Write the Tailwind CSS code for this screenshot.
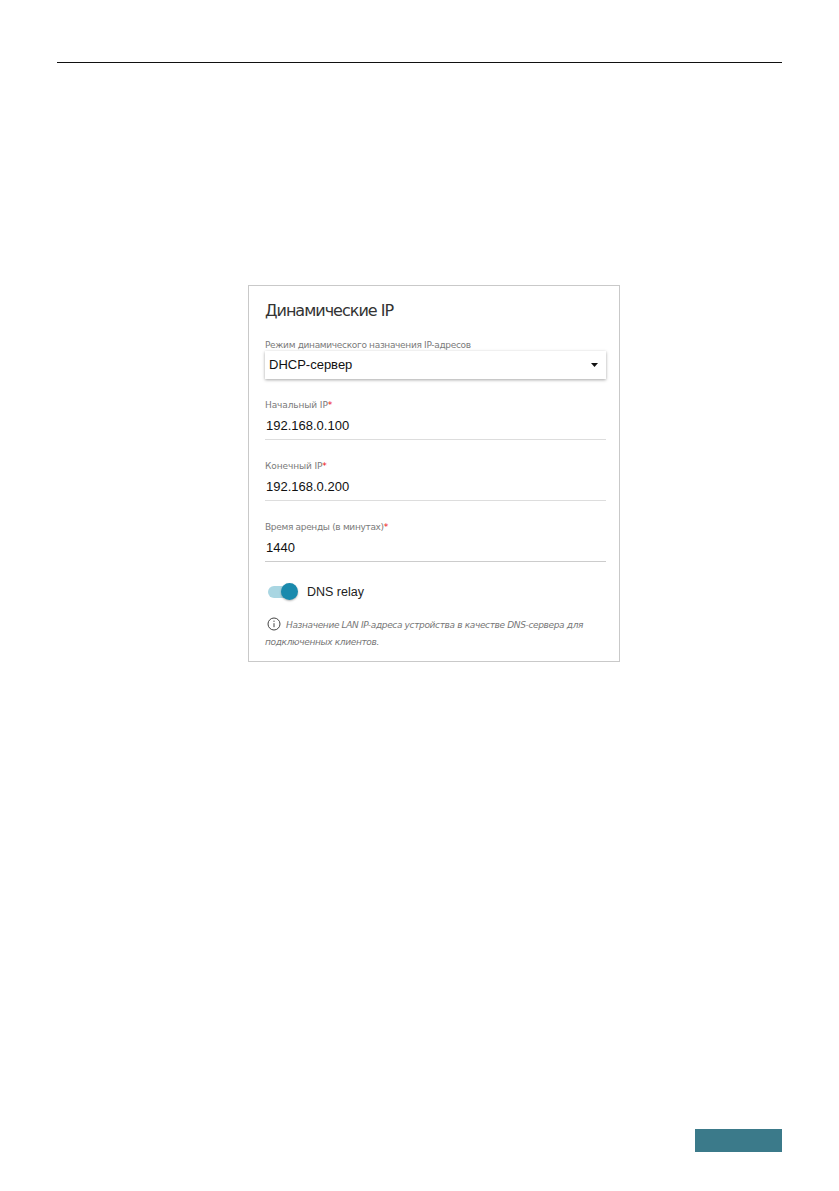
<!DOCTYPE html>
<html lang="ru"><head><meta charset="utf-8"><script src="https://cdn.jsdelivr.net/npm/@tailwindcss/browser@4"></script></head>
<body class="bg-white">
<div class="w-[839px] h-[1191px] flex flex-col pl-[57px] pr-[57px] overflow-hidden font-['Liberation_Sans',sans-serif]">
  <div class="mt-[62px] h-px shrink-0 bg-[#111]"></div>
  <div class="mt-[222px] ml-[191px] w-[372px] h-[377px] shrink-0 border border-[#c9c9c9] pl-4 pr-[13px] flex flex-col">
    <div class="mt-[14px] h-[22px] leading-[22px] text-[16px] text-[#333] font-['DejaVu_Sans',sans-serif] tracking-[-1px] whitespace-nowrap">Динамические IP</div>
    <div class="mt-[18px] h-[11px] leading-[11px] text-[9px] text-[#7a7a7a] font-['DejaVu_Sans',sans-serif] tracking-[-0.32px] whitespace-nowrap">Режим динамического назначения IP-адресов</div>
    <div class="h-[28px] flex items-center justify-between bg-white shadow-[0_1px_3px_rgba(0,0,0,0.35)] pl-1 pr-2 text-[13px] text-[#111]">
      <span>DHCP-сервер</span>
      <svg width="7" height="4" viewBox="0 0 7 4"><path d="M0 0h7L3.500 4z" fill="#111"/></svg>
    </div>
    <div class="mt-[21px] h-[11px] leading-[11px] text-[9px] text-[#7a7a7a] font-['DejaVu_Sans',sans-serif] tracking-[-0.1px] whitespace-nowrap">Начальный IP<span class="text-[#e11]">*</span></div>
    <div class="mt-[6px] h-[23px] pl-px leading-[18px] border-b border-[#ddd] text-[13px] text-[#111]">192.168.0.100</div>
    <div class="mt-[21px] h-[11px] leading-[11px] text-[9px] text-[#7a7a7a] font-['DejaVu_Sans',sans-serif] tracking-[-0.1px] whitespace-nowrap">Конечный IP<span class="text-[#e11]">*</span></div>
    <div class="mt-[6px] h-[23px] pl-px leading-[18px] border-b border-[#ddd] text-[13px] text-[#111]">192.168.0.200</div>
    <div class="mt-[21px] h-[11px] leading-[11px] text-[9px] text-[#7a7a7a] font-['DejaVu_Sans',sans-serif] tracking-[-0.32px] whitespace-nowrap">Время аренды (в минутах)<span class="text-[#e11]">*</span></div>
    <div class="mt-[6px] h-[23px] pl-px leading-[18px] border-b border-[#ccc] text-[13px] text-[#111]">1440</div>
    <div class="mt-[20px] h-5 flex items-center pl-[3px]">
      <div class="relative w-[30px] h-5 shrink-0">
        <div class="absolute left-0 top-[4px] w-[26px] h-3 rounded-full bg-[#a9d6e2]"></div>
        <div class="absolute right-0 top-[1px] w-[17px] h-[17px] rounded-full bg-[#1a8aad] shadow-[0_1px_2px_rgba(0,0,0,0.3)]"></div>
      </div>
      <span class="ml-[9px] text-[12.5px] text-[#222]">DNS relay</span>
    </div>
    <div class="mt-[15px] text-[9px] leading-[17px] italic text-[#777] font-['DejaVu_Sans',sans-serif] tracking-[-0.35px]">
      <svg class="inline-block align-[-3px] mr-[5px] ml-[2px]" width="14" height="14" viewBox="0 0 14 14" fill="none" stroke="#444"><circle cx="7" cy="7" r="6"/><path d="M7 6.200v4M7 3.600v1.300"/></svg>Назначение LAN IP-адреса устройства в качестве DNS-сервера для подключенных клиентов.
    </div>
  </div>
  <div class="mt-[467px] ml-auto w-[87px] h-[23px] shrink-0 bg-[#3b7a8a]"></div>
</div>
</body></html>
